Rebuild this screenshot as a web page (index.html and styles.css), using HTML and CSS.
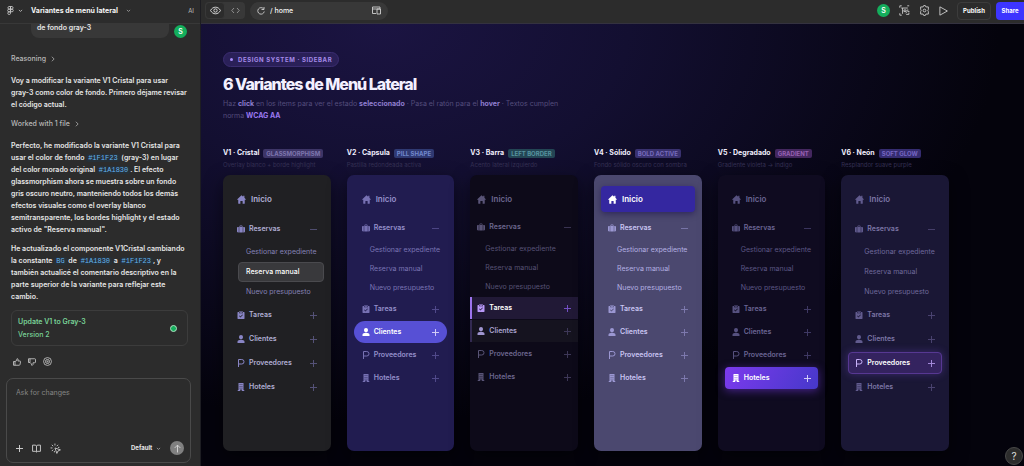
FILE: index.html
```html
<!DOCTYPE html>
<html lang="es">
<head>
    <meta charset="UTF-8">
    <meta name="viewport" content="width=device-width, initial-scale=1.0">
    <title>Variantes de menú lateral</title>
    <link rel="stylesheet" href="styles.css">
</head>
<body>

<!-- Icon sprite -->
<svg class="sprite" aria-hidden="true">
    <symbol id="i-home" viewBox="0 0 16 16"><path fill="currentColor" d="M8 .5.5 7.400c-.5.5-.2 1.100.4 1.100h1.300V14.500c0 .6.4 1 1 1h2.800v-4.200c0-.5.3-.8.8-.8h2.400c.5 0 .8.300.8.800v4.200h2.800c.6 0 1-.4 1-1V8.500h1.300c.6 0 .9-.6.4-1.100L13.200 5V1.500h-2.200v1.500z"/></symbol>
    <symbol id="i-case" viewBox="0 0 16 16"><path fill="currentColor" d="M5 4V2.500C5 1.700 5.700 1 6.500 1h3c.8 0 1.500.7 1.500 1.500V4h.5v11h-7V4zm1.300 0h3.400V2.400H6.300zM3.500 4v11H2c-1 0-2-.8-2-1.800V5.800C0 4.800 1 4 2 4zM12.500 4H14c1 0 2 .8 2 1.800v7.400c0 1-1 1.800-2 1.800h-1.500z"/></symbol>
    <symbol id="i-task" viewBox="0 0 16 16"><path fill="currentColor" fill-rule="evenodd" d="M2 2h2v2.500h8V2h2c.6 0 1 .4 1 1v12c0 .6-.4 1-1 1H2c-.6 0-1-.4-1-1V3c0-.6.4-1 1-1zm3-2h1.200v1.200h3.600V0H11v3.500H5zm-.8 9.800 2.600 3.400 5-5.200-1.100-1-3.800 4L5.300 9z"/></symbol>
    <symbol id="i-user" viewBox="0 0 16 16"><path fill="currentColor" d="M8 0a4 4 0 0 1 4 4.200C12 6.800 10.200 9 8 9S4 6.800 4 4.200A4 4 0 0 1 8 0zM5 10h6c2.200 0 4 1.600 4 3.700V16H1v-2.300C1 11.600 2.800 10 5 10z"/></symbol>
    <symbol id="i-prov" viewBox="0 0 16 16"><path fill="none" stroke="currentColor" stroke-width="2" d="M3 16V1h6.500a4.500 4.500 0 0 1 0 9H3"/></symbol>
    <symbol id="i-hotel" viewBox="0 0 16 16"><path fill="currentColor" fill-rule="evenodd" d="M3 0h10v14h1.500v2H9.500v-3h-3v3h-5v-2H3zm2.300 2.500v1.500h1.700V2.500zm3.700 0v1.500h1.700V2.500zM5.300 6v1.500h1.700V6zM9 6v1.500h1.700V6zM5.300 9.500V11h1.700V9.500zm3.700 0V11h1.700V9.500z"/></symbol>
    <symbol id="i-plus" viewBox="0 0 16 16"><path fill="none" stroke="currentColor" stroke-width="2.200" d="M8 0v16M0 8h16"/></symbol>
    <symbol id="i-minus" viewBox="0 0 16 16"><path fill="none" stroke="currentColor" stroke-width="2" d="M0 8h16"/></symbol>
    <symbol id="i-down" viewBox="0 0 16 16"><path fill="none" stroke="currentColor" stroke-width="2.500" d="m3 6 5 5 5-5"/></symbol>
    <symbol id="i-right" viewBox="0 0 16 16"><path fill="none" stroke="currentColor" stroke-width="2" d="m5 2 6 6-6 6"/></symbol>
</svg>

<div class="app">
    <!-- Chat panel -->
    <aside class="chat">
        <header class="chat-header">
            <button class="icon-btn logo" aria-label="Figma">
                <svg width="7" height="9" viewBox="0 0 14 18" fill="none" stroke="currentColor" stroke-width="1.600"><path d="M7 1H4a2.700 2.700 0 0 0 0 5.300h3zM7 1h3a2.700 2.700 0 0 1 0 5.300H7zM7 6.300H4a2.700 2.700 0 0 0 0 5.400h3zM7 11.700H4A2.700 2.700 0 1 0 7 14.400z"/><circle cx="9.800" cy="9" r="2.700"/></svg>
                <svg width="5" height="5"><use href="#i-down"/></svg>
            </button>
            <button class="title-btn">Variantes de menú lateral
                <svg width="5" height="5"><use href="#i-down"/></svg>
            </button>
            <span class="ai-tag">AI</span>
        </header>

        <div class="chat-log">
            <div class="user-msg">
                <p class="bubble">de fondo gray-3</p>
                <span class="avatar">S</span>
            </div>
            <button class="step">Reasoning <svg width="6" height="6"><use href="#i-right"/></svg></button>
            <p>Voy a modificar la variante V1 Cristal para usar <span class="token">gray-3</span> como color de fondo. Primero déjame revisar el código actual.</p>
            <button class="step">Worked with 1 file <svg width="6" height="6"><use href="#i-right"/></svg></button>
            <p>Perfecto, he modificado la variante V1 Cristal para usar el color de fondo <code>#1F1F23</code> (gray-3) en lugar del color morado original <code>#1A1830</code>. El efecto glassmorphism ahora se muestra sobre un fondo gris oscuro neutro, manteniendo todos los demás efectos visuales como el overlay blanco semitransparente, los bordes highlight y el estado activo de "Reserva manual".</p>
            <p>He actualizado el componente V1Cristal cambiando la constante <code>BG</code> de <code>#1A1830</code> a <code>#1F1F23</code>, y también actualicé el comentario descriptivo en la parte superior de la variante para reflejar este cambio.</p>
            <button class="version">
                <span>
                    <strong>Update V1 to Gray-3</strong>
                    <span>Version 2</span>
                </span>
                <span class="version-dot"></span>
            </button>
            <div class="feedback">
                <button class="icon-btn" aria-label="Me gusta"><svg width="8" height="8" viewBox="0 0 16 16" fill="none" stroke="currentColor" stroke-width="1.600"><path d="M1 7h3v7.500H1zM4 7l3-1.500L8 1.500c2-.3 2.500 1 2.200 2.500L9.700 6H14c1 0 1.400.8 1.200 1.500l-1.400 6c-.2.700-.7 1-1.400 1H4"/></svg></button>
                <button class="icon-btn" aria-label="No me gusta"><svg width="8" height="8" viewBox="0 0 16 16" fill="none" stroke="currentColor" stroke-width="1.600"><path d="M1 1.500h3V9H1zM4 1.500h9.500c1 0 1.500.5 1.500 1.500v5c0 1-.5 1.500-1.500 1.500H10v3.500L8 15l-1.500-3.500L4 9"/></svg></button>
                <button class="icon-btn" aria-label="Restaurar"><svg width="9" height="9" viewBox="0 0 16 16" fill="none" stroke="currentColor" stroke-width="1.400"><circle cx="8" cy="8" r="7"/><circle cx="8" cy="8" r="3.600"/><circle cx="8" cy="8" r="1"/></svg></button>
            </div>
        </div>

        <form class="composer">
            <textarea aria-label="Ask for changes" placeholder="Ask for changes"></textarea>
            <div class="composer-bar">
                <button type="button" class="icon-btn" aria-label="Adjuntar"><svg width="7" height="7"><use href="#i-plus"/></svg></button>
                <button type="button" class="icon-btn" aria-label="Librería"><svg width="9" height="9" viewBox="0 0 16 16" fill="none" stroke="currentColor" stroke-width="1.600"><path d="M8 3.500C7.500 2.500 6.500 2 5.500 2H1v11h4.500c1 0 2 .4 2.500 1.300.5-.9 1.500-1.300 2.500-1.300H15V2h-4.500C9.500 2 8.500 2.500 8 3.500zV14"/></svg></button>
                <button type="button" class="icon-btn" aria-label="Seleccionar"><svg width="11" height="11" viewBox="0 0 20 20" fill="none" stroke="currentColor" stroke-width="1.600"><path d="m9 9 10 3.500-4.500 2L12.500 19zM9 1v3.500M1 9h3.500M3.300 3.300l2.500 2.500M14.700 3.300l-2.500 2.500M3.300 14.700l2.500-2.500M17 8h-2.500M8 17v-2.500"/></svg></button>
                <select aria-label="Modelo"><option>Default</option></select>
                <svg class="select-arrow" width="5" height="5"><use href="#i-down"/></svg>
                <button class="send" aria-label="Enviar"><svg width="9" height="9" viewBox="0 0 16 16" fill="none" stroke="currentColor" stroke-width="1.600"><path d="M8 15V2M3 7l5-5 5 5"/></svg></button>
            </div>
        </form>
    </aside>

    <!-- Preview -->
    <div class="preview">
        <header class="toolbar">
            <div class="view-switch">
                <button class="on" aria-label="Vista previa"><svg width="11" height="9" viewBox="0 0 20 16" fill="none" stroke="currentColor" stroke-width="1.700"><path d="M1 8c2-4 5.500-6 9-6s7 2 9 6c-2 4-5.500 6-9 6S3 12 1 8z"/><circle cx="10" cy="8" r="3"/></svg></button>
                <button aria-label="Código"><svg width="9" height="7" viewBox="0 0 18 14" fill="none" stroke="currentColor" stroke-width="1.800"><path d="M6 2 1.500 7 6 12M12 2l4.500 5-4.500 5"/></svg></button>
            </div>
            <div class="address">
                <button class="icon-btn" aria-label="Recargar"><svg width="8" height="8" viewBox="0 0 16 16" fill="none" stroke="currentColor" stroke-width="1.800"><path d="M13 3.500A6.500 6.500 0 1 0 14.500 9M14 0v5H9"/></svg></button>
                <input type="text" aria-label="Ruta" value="/ home">
                <button class="icon-btn" aria-label="Dispositivos"><svg width="9" height="9" viewBox="0 0 18 18" fill="none" stroke="currentColor" stroke-width="1.800"><path d="M8 15H1V2h15v4M1 6h15M10 6h7v10h-7z"/></svg></button>
            </div>
            <div class="tools">
                <span class="avatar">S</span>
                <button class="icon-btn" aria-label="Componentes"><svg width="11" height="11" viewBox="0 0 20 20" fill="none" stroke="currentColor" stroke-width="1.600"><path d="M1.500 5V1.500H5M15 1.500h3.500M1.500 15v3.500H5M4 5.500h12M6.500 16V5.500M9 9h4v3H9zM12 15l2-2M16 8v4h3M13 17h5v-3"/></svg></button>
                <button class="icon-btn" aria-label="Ajustes"><svg width="11" height="11" viewBox="0 0 20 20" fill="none" stroke="currentColor" stroke-width="1.600"><path d="m7.500 3.500 1-2.500h3l1 2.500h4.500v4.500l-1 2 1 2v4.500h-4.500l-1 2.500h-3l-1-2.500H3V12l1-2-1-2V3.500z"/><circle cx="10" cy="10" r="2.500"/></svg></button>
                <button class="icon-btn" aria-label="Reproducir"><svg width="9" height="10" viewBox="0 0 16 18" fill="none" stroke="currentColor" stroke-width="1.600" stroke-linejoin="round"><path d="M1.500 1.500v15L15 9z"/></svg></button>
                <button class="publish">Publish</button>
                <button class="share">Share</button>
            </div>
        </header>

        <main class="canvas">
            <span class="eyebrow">Design System · Sidebar</span>
            <h1>6 Variantes de Menú Lateral</h1>
            <p class="intro">Haz <b>click</b> en los ítems para ver el estado <b>seleccionado</b> · Pasa el ratón para el <b>hover</b> · Textos cumplen norma <b class="wcag">WCAG AA</b></p>
            <div class="variants" id="variants"></div>
        </main>
        <button class="help" aria-label="Ayuda">?</button>
    </div>
</div>

<script>
    const variants = [
        { id: 'v1', name: 'V1 · Cristal', tag: 'Glassmorphism', desc: 'Overlay blanco + borde highlight', active: 'Reserva manual' },
        { id: 'v2', name: 'V2 · Cápsula', tag: 'Pill shape', desc: 'Pastilla redondeada activa', active: 'Clientes' },
        { id: 'v3', name: 'V3 · Barra', tag: 'Left border', desc: 'Acento lateral izquierdo', active: 'Tareas', hover: 'Clientes' },
        { id: 'v4', name: 'V4 · Sólido', tag: 'Bold active', desc: 'Fondo sólido oscuro con sombra', active: 'Inicio' },
        { id: 'v5', name: 'V5 · Degradado', tag: 'Gradient', desc: 'Gradiente violeta → índigo', active: 'Hoteles' },
        { id: 'v6', name: 'V6 · Neón', tag: 'Soft glow', desc: 'Resplandor suave purple', active: 'Proveedores' }
    ];

    const items = [
        { label: 'Inicio', icon: 'home', cls: 'home' },
        { label: 'Reservas', icon: 'case', sign: 'minus', children: ['Gestionar expediente', 'Reserva manual', 'Nuevo presupuesto'] },
        { label: 'Tareas', icon: 'task', sign: 'plus' },
        { label: 'Clientes', icon: 'user', sign: 'plus' },
        { label: 'Proveedores', icon: 'prov', sign: 'plus' },
        { label: 'Hoteles', icon: 'hotel', sign: 'plus' }
    ];

    function renderItem(item, v) {
        const classes = ['item', item.cls, item.label === v.active && 'active', item.label === v.hover && 'hover'];
        const icon = item.icon ? `<svg class="icon"><use href="#i-${item.icon}"/></svg>` : '';
        const sign = item.sign ? `<svg class="sign"><use href="#i-${item.sign}"/></svg>` : '';
        let html = `<button class="${classes.filter(Boolean).join(' ')}">${icon}<span>${item.label}</span>${sign}</button>`;
        if (item.children) {
            html += `<div class="submenu">${item.children.map(label => renderItem({ label, cls: 'sub' }, v)).join('')}</div>`;
        }
        return html;
    }

    document.getElementById('variants').innerHTML = variants.map(v => `
        <section class="variant ${v.id}">
            <div class="variant-head"><h2>${v.name}</h2><span class="tag">${v.tag}</span></div>
            <p class="desc">${v.desc}</p>
            <nav class="menu" aria-label="${v.name}">${items.map(i => renderItem(i, v)).join('')}</nav>
        </section>`).join('');

    // Select an item on click
    document.querySelectorAll('.menu').forEach(menu => {
        menu.addEventListener('click', function (e) {
            const item = e.target.closest('.item');
            if (!item) return;
            menu.querySelectorAll('.active').forEach(el => el.classList.remove('active'));
            item.classList.add('active');
        });
    });
</script>

</body>
</html>
```
FILE: styles.css
```css
* {
    box-sizing: border-box;
}

body {
    margin: 0;
    background: #05030f;
    color: #e6e6e6;
    font-family: Inter, "Liberation Sans", sans-serif;
    font-size: 7px;
    line-height: 12px;
}

h1, h2, p {
    margin: 0;
}

button, input, textarea, select {
    margin: 0;
    padding: 0;
    border: none;
    background: none;
    color: inherit;
    font: inherit;
}

button {
    cursor: pointer;
}

svg {
    display: block;
    flex: none;
}

.sprite {
    display: none;
}

.app {
    display: flex;
    height: 100vh;
}

.icon-btn {
    display: flex;
    align-items: center;
    gap: 4px;
    color: #d0d0d0;
}

.avatar {
    width: 13px;
    height: 13px;
    border-radius: 50%;
    background: #14ae5c;
    color: #fff;
    font-weight: 600;
    line-height: 13px;
    text-align: center;
}

/* Chat panel */
.chat {
    display: flex;
    flex-direction: column;
    flex: none;
    width: 201px;
    background: #2c2c2c;
    border-right: 1px solid #1d1d22;
}

.chat-header {
    display: flex;
    align-items: center;
    flex: none;
    height: 24px;
    padding: 0 6px 2px 7px;
    border-bottom: 1px solid #383838;
}

.title-btn {
    display: flex;
    align-items: center;
    gap: 8px;
    margin-left: 8px;
    color: #f5f5f5;
    font-weight: 700;
}

.title-btn svg {
    color: #aaa;
}

.ai-tag {
    margin-left: auto;
    color: #bbb;
    font-size: 6px;
}

.chat-log {
    display: flex;
    flex-direction: column;
    flex: 1;
    min-height: 0;
    padding: 0 12px 0 11px;
    overflow: hidden;
    font-weight: 600;
}

.chat-log > p {
    margin-bottom: 7px;
}

.token {
    white-space: nowrap;
}

.user-msg {
    display: flex;
    align-items: flex-end;
    justify-content: flex-end;
    gap: 5px;
    margin-bottom: 15px;
    padding-right: 1px;
}

.bubble {
    width: 138px;
    height: 14px;
    padding: 0 6px;
    border-radius: 0 0 8px 8px;
    background: #383838;
    line-height: 8px;
}

.step {
    display: flex;
    align-items: center;
    gap: 4px;
    margin-bottom: 10px;
    color: #b8b8b8;
    font-weight: 500;
    line-height: 12px;
}

.chat-log code {
    padding: 0 2px;
    border-radius: 2px;
    background: #263038;
    color: #63b3ed;
    font: 7px "Liberation Mono", monospace;
}

.version {
    display: flex;
    align-items: center;
    justify-content: space-between;
    height: 36px;
    flex: none;
    padding: 0 10px 0 6px;
    border: 1px solid #3c3c3c;
    border-radius: 6px;
    color: #79d297;
    line-height: 13px;
    text-align: left;
}

.version strong,
.version span {
    display: block;
    font-weight: 500;
}

.version strong {
    font-weight: 600;
}

.version-dot {
    width: 7px;
    height: 7px;
    border: 1px solid #afe0c2;
    border-radius: 50%;
    background: #14ae5c;
}

.feedback {
    display: flex;
    gap: 7px;
    margin: 11px 0 0 2px;
}

.composer {
    flex: none;
    height: 85px;
    display: flex;
    flex-direction: column;
    margin: 0 9px 3px 6px;
    padding: 8px 6px 7px 9px;
    border: 1px solid #4a4a4a;
    border-radius: 7px;
}

.composer textarea {
    flex: 1;
    outline: none;
    resize: none;
}

.composer textarea::placeholder {
    color: #858585;
}

.composer-bar {
    display: flex;
    align-items: center;
    gap: 9px;
}

.composer-bar select {
    appearance: none;
    margin-left: auto;
    font-size: 6px;
    font-weight: 700;
}

.select-arrow {
    margin-left: -6px;
    color: #aaa;
}

.send {
    display: grid;
    place-items: center;
    width: 14px;
    height: 14px;
    border-radius: 50%;
    background: #808080;
    color: #d8d8d8;
}

/* Preview toolbar */
.preview {
    position: relative;
    display: flex;
    flex-direction: column;
    flex: 1;
    min-width: 0;
}

.toolbar {
    display: flex;
    align-items: center;
    flex: none;
    height: 24px;
    padding: 0 0 2px 4px;
    background: #2c2c2c;
    border-bottom: 1px solid #343240;
}

.view-switch {
    display: flex;
    margin-right: 5px;
    border-radius: 4px;
    background: #383838;
}

.view-switch button {
    display: grid;
    place-items: center;
    width: 20px;
    height: 17px;
    color: #999;
}

.view-switch .on {
    border: 1px solid #383838;
    border-radius: 4px;
    background: #2c2c2c;
    color: #ddd;
}

.address {
    display: flex;
    align-items: center;
    gap: 5px;
    width: 138px;
    height: 18px;
    padding: 0 7px;
    border-radius: 9px;
    background: #383838;
}

.address input {
    flex: 1;
    min-width: 0;
    color: #f0f0f0;
    font-weight: 500;
}

.tools {
    display: flex;
    align-items: center;
    gap: 9px;
    margin-left: auto;
}

.publish,
.share {
    height: 18px;
    border-radius: 4px;
    color: #fff;
    font-size: 6px;
    font-weight: 700;
}

.publish {
    width: 34px;
    border: 1px solid #3c3c3c;
}

.share {
    width: 28px;
    margin-left: -4px;
    border-radius: 4px 0 0 4px;
    background: #3d35ff;
}

/* Canvas */
.canvas {
    flex: 1;
    min-height: 0;
    overflow: hidden;
    padding: 28px 75px 0 22px;
    background: radial-gradient(ellipse 75% 90% at 22% 0%, #1b1442 0%, #130f31 40%, #04030c 100%);
}

.eyebrow {
    display: flex;
    align-items: center;
    gap: 5px;
    width: max-content;
    height: 15px;
    padding: 0 6px;
    border: 1px solid #3b2d70;
    border-radius: 8px;
    background: #2a2058;
    color: #a58be8;
    font-size: 6px;
    font-weight: 700;
    letter-spacing: 0.1em;
    text-transform: uppercase;
}

.eyebrow::before {
    content: "";
    width: 3px;
    height: 3px;
    border-radius: 50%;
    background: #a78bfa;
}

h1 {
    margin-top: 7px;
    color: #f3f0ff;
    font-size: 16px;
    font-weight: 800;
    letter-spacing: -1px;
    line-height: 20px;
}

.intro {
    max-width: 350px;
    margin-top: 4px;
    color: #544d7c;
}

.intro b {
    color: #8f7fd0;
    font-weight: 700;
}

.intro .wcag {
    color: #9a78ee;
}

.variants {
    display: grid;
    grid-template-columns: repeat(6, minmax(0, 1fr));
    gap: 16px;
    margin-top: 25px;
}

.variant-head {
    display: flex;
    align-items: center;
    gap: 4px;
    height: 12px;
    white-space: nowrap;
}

.variant h2 {
    color: #f0eefc;
    font-size: 7px;
    font-weight: 700;
    line-height: 12px;
}

.tag {
    padding: 0 3px;
    border-radius: 2px;
    background: var(--tag-bg);
    color: var(--tag-text);
    font-size: 6px;
    font-weight: 700;
    line-height: 9px;
    text-transform: uppercase;
}

.desc {
    color: #353053;
    font-size: 6px;
    white-space: nowrap;
}

/* Menus */
.menu {
    display: flex;
    flex-direction: column;
    gap: var(--gap);
    min-height: 276px;
    margin-top: 4px;
    padding: 11px 7px;
    border-radius: 7px;
    background: var(--bg);
    box-shadow: 0 6px 18px rgba(0, 0, 0, 0.5);
}

.item {
    display: flex;
    align-items: center;
    gap: 4px;
    height: 22px;
    padding: 0 7px;
    border-radius: 4px;
    color: var(--text);
    font-size: 7px;
    font-weight: 600;
    white-space: nowrap;
}

.icon {
    width: 8px;
    height: 8px;
    color: var(--icon);
}

.sign {
    width: 7px;
    height: 7px;
    margin-left: auto;
    color: var(--sign);
}

.home {
    gap: 5px;
    height: 26px;
    margin-bottom: 4px;
    font-size: 8px;
}

.home .icon {
    width: 9px;
    height: 9px;
}

.submenu {
    display: flex;
    flex-direction: column;
    margin-left: 8px;
}

.submenu .item {
    height: var(--sub-height);
    padding: 0 8px;
    color: var(--sub-text);
    font-weight: 400;
}

.item.active {
    color: #fff;
    --icon: #fff;
    --sign: #d5cff8;
}

.v1 {
    --bg: #202023;
    --text: #b0aed4;
    --icon: #8985c5;
    --sign: #56537a;
    --sub-text: #8481b5;
    --gap: 2px;
    --sub-height: 20px;
    --tag-bg: #3d3567;
    --tag-text: #7d75ae;
}

.v1 .submenu .active {
    padding: 0 7px;
    border: 1px solid #4a4a4e;
    background: #39393c;
    color: #fff;
    font-weight: 500;
}

.v2 {
    --bg: #211c50;
    --text: #9590cb;
    --icon: #7771b3;
    --sign: #524b8c;
    --sub-text: #7a74b3;
    --gap: 1px;
    --sub-height: 19px;
    --tag-bg: #2f3972;
    --tag-text: #7288cc;
}

.v2 .item {
    padding: 0 8px;
    border-radius: 11px;
}

.v2 .active {
    background: #5750d5;
}

.v3 {
    --bg: #0d0a19;
    --text: #6c678e;
    --icon: #595477;
    --sign: #403959;
    --sub-text: #575275;
    --gap: 1px;
    --sub-height: 19px;
    --tag-bg: #234554;
    --tag-text: #5794a0;
}

.v3 .menu {
    padding: 11px 0;
}

.v3 .item {
    padding: 0 7px 0 5px;
    border-left: 2px solid transparent;
    border-radius: 0;
}

.v3 .home {
    margin-bottom: 3px;
}

.v3 .active {
    border-left-color: #9c73ed;
    background: #211936;
    --icon: #b898f8;
    --sign: #7650c8;
}

.v3 .hover {
    border-left-color: #332a52;
    background: #15131f;
    color: #aaa4cf;
    --icon: #a096d0;
}

.v4 {
    --bg: #4b486f;
    --text: #c9c5f2;
    --icon: #9b97d2;
    --sign: #7e7aaf;
    --sub-text: #b4b0e2;
    --gap: 1px;
    --sub-height: 19px;
    --tag-bg: #39316f;
    --tag-text: #766bbd;
}

.v4 .active {
    background: #3427a0;
    box-shadow: 0 2px 6px rgba(20, 10, 70, 0.5);
}

.v5 {
    --bg: #0f0b20;
    --text: #6a6593;
    --icon: #56517f;
    --sign: #413a66;
    --sub-text: #5c5784;
    --gap: 1px;
    --sub-height: 19px;
    --tag-bg: #44275f;
    --tag-text: #9661b3;
}

.v5 .active {
    background: linear-gradient(120deg, #7c3aed, #4638ca);
    box-shadow: 0 2px 8px rgba(124, 58, 237, 0.5);
}

.v6 {
    --bg: #1a1735;
    --text: #7c76a5;
    --icon: #615b8e;
    --sign: #4b4571;
    --sub-text: #6f699b;
    --gap: 2px;
    --sub-height: 20px;
    --tag-bg: #352c70;
    --tag-text: #7567c3;
}

.v6 .active {
    padding: 0 6px;
    border: 1px solid #573893;
    background: #34235f;
    box-shadow: 0 0 8px rgba(139, 92, 246, 0.3);
    --icon: #c8b2fa;
    --sign: #a68bdc;
}

.help {
    position: absolute;
    right: 1px;
    bottom: 1px;
    width: 18px;
    height: 18px;
    border: 1px solid #484848;
    border-radius: 50%;
    background: #2c2c2c;
    color: #ddd;
    font-size: 10px;
}
```
